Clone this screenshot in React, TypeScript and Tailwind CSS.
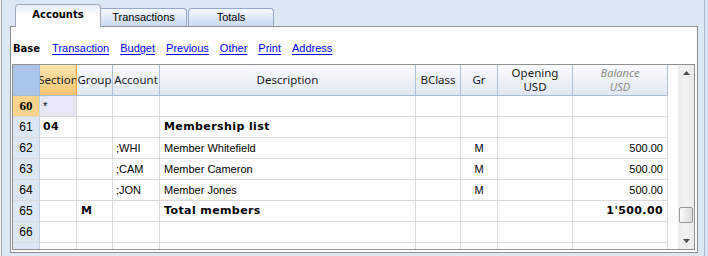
import React from "react";

const COLS = "grid-cols-[27px_37px_36px_47px_256px_45px_37px_75px_95px]";

type Row = {
  n: string;
  sec?: string;
  grp?: string;
  acc?: string;
  desc?: string;
  gr?: string;
  bal?: string;
  bold?: boolean;
  current?: boolean;
};

const rows: Row[] = [
  { n: "60", sec: "*", current: true },
  { n: "61", sec: "04", desc: "Membership list", bold: true },
  { n: "62", acc: ";WHI", desc: "Member Whitefield", gr: "M", bal: "500.00" },
  { n: "63", acc: ";CAM", desc: "Member Cameron", gr: "M", bal: "500.00" },
  { n: "64", acc: ";JON", desc: "Member Jones", gr: "M", bal: "500.00" },
  { n: "65", grp: "M", desc: "Total members", bal: "1'500.00", bold: true },
  { n: "66" },
];

const tahoma = "font-['Liberation_Sans',Arial,sans-serif]";
const tahomaBold = "font-['DejaVu_Sans',sans-serif] font-bold";
const dataBold = "font-['DejaVu_Sans',sans-serif] font-bold tracking-[0.4px]";
const segoe = "font-['Noto_Sans',sans-serif]";

function Cell({
  children,
  className = "",
}: {
  children?: React.ReactNode;
  className?: string;
}) {
  return (
    <div
      className={`h-full border-r border-r-[#dadada] flex items-center overflow-hidden whitespace-nowrap ${className}`}
    >
      {children}
    </div>
  );
}

function HeadCell({
  children,
  className = "",
}: {
  children?: React.ReactNode;
  className?: string;
}) {
  return (
    <div
      className={`h-full border-r border-r-[#aec0d8] flex flex-col items-center justify-center overflow-hidden whitespace-nowrap text-[11.5px] leading-[14px] text-[#1b1b1b] ${segoe} ${className}`}
    >
      {children}
    </div>
  );
}

function Tri({ up }: { up?: boolean }) {
  return (
    <svg width="7" height="4" viewBox="0 0 7 4">
      {up ? (
        <polygon points="0,4 7,4 3.5,0" fill="#4a4a4a" />
      ) : (
        <polygon points="0,0 7,0 3.5,4" fill="#4a4a4a" />
      )}
    </svg>
  );
}

export default function App() {
  return (
    <div className="w-[708px] h-[256px] bg-[#dce8f4] flex overflow-hidden">
      <div className="w-px h-full bg-[#f4f6f8]" />
      <div className="w-px h-full bg-[#9ea3aa]" />
      <div className="ml-[8px] w-[688px] flex flex-col">
        {/* tabs */}
        <div className="h-[26px] flex items-end pl-[5px] relative z-10">
          <div
            className={`h-[23px] -mb-px w-[86px] bg-linear-to-b from-[#e6eefa] via-white to-white border border-b-0 border-[#a3a9b3] rounded-t-[4px] flex items-center justify-center pb-[3px] text-[10px] text-black ${tahomaBold}`}
          >
            Accounts
          </div>
          <div
            className={`h-[18px] w-[86px] bg-linear-to-b from-[#f6f9fe] to-[#c7d8f1] border border-b-0 border-l-0 border-[#95a8c6] rounded-tr-[4px] flex items-center justify-center text-[11px] text-black ${tahoma}`}
          >
            Transactions
          </div>
          <div
            className={`h-[18px] w-[86px] ml-px bg-linear-to-b from-[#f6f9fe] to-[#c7d8f1] border border-b-0 border-[#95a8c6] rounded-t-[4px] flex items-center justify-center text-[11px] text-black ${tahoma}`}
          >
            Totals
          </div>
        </div>
        {/* panel */}
        <div className="h-[227px] border border-[#8d9097] bg-white pl-px pr-[2px] flex flex-col">
          <div className="h-[37px] pt-[5px] flex items-center gap-[11px] pl-px text-[11px]">
            <span className={`text-[10px] text-black mr-px ${tahomaBold}`}>Base</span>
            {["Transaction", "Budget", "Previous", "Other", "Print", "Address"].map(
              (l) => (
                <span
                  key={l}
                  className={`text-[#0000ff] underline underline-offset-[2px] ${tahoma}`}
                >
                  {l}
                </span>
              )
            )}
          </div>
          {/* grid */}
          <div className="h-[186px] border border-[#8f8f8f] flex">
            <div className="w-[655px] flex flex-col">
              {/* header */}
              <div
                className={`h-[31px] grid ${COLS} border-b border-b-[#a8bbd5] bg-linear-to-b from-[#fbfcfe] to-[#e0e8f4]`}
              >
                <div className="h-full bg-[#abc5e9] border-r border-r-[#9db6d9]" />
                <HeadCell className="bg-linear-to-b from-[#fde4ad] to-[#f8c673] border-r-[#f0a03c]">
                  Section
                </HeadCell>
                <HeadCell>Group</HeadCell>
                <HeadCell>Account</HeadCell>
                <HeadCell>Description</HeadCell>
                <HeadCell>BClass</HeadCell>
                <HeadCell>Gr</HeadCell>
                <HeadCell>
                  <span>Opening</span>
                  <span>USD</span>
                </HeadCell>
                <HeadCell className="italic text-[#8c8c8c] text-[11px]">
                  <span>Balance</span>
                  <span>USD</span>
                </HeadCell>
              </div>
              {/* rows */}
              {rows.map((r) => {
                const b = r.bold ? dataBold : tahoma;
                return (
                  <div
                    key={r.n}
                    className={`h-[21px] grid ${COLS} border-b border-b-[#dadada] text-[11px] text-black`}
                  >
                    <div
                      className={`h-full border-r border-r-[#c3d1e4] flex items-center justify-center text-[12px] ${
                        r.current
                          ? "bg-[#fbd48c] font-bold font-['Liberation_Serif',serif] text-[13px]"
                          : "bg-[#dde7f3] font-['Liberation_Sans_Narrow','Liberation_Sans',sans-serif]"
                      }`}
                    >
                      {r.n}
                    </div>
                    <Cell
                      className={`px-[3px] ${r.current ? "bg-[#e6e6f4]" : ""} ${
                        r.sec === "04" ? dataBold : tahoma
                      }`}
                    >
                      {r.sec}
                    </Cell>
                    <Cell className={`px-[4px] ${dataBold}`}>{r.grp}</Cell>
                    <Cell className={`px-[3px] ${tahoma}`}>{r.acc}</Cell>
                    <Cell className={`px-[4px] ${b}`}>{r.desc}</Cell>
                    <Cell />
                    <Cell className={`justify-center ${tahoma}`}>{r.gr}</Cell>
                    <Cell />
                    <Cell className={`justify-end px-[4px] ${b}`}>{r.bal}</Cell>
                  </div>
                );
              })}
              <div className={`flex-1 grid ${COLS}`}>
                <div className="h-full bg-[#dde7f3] border-r border-r-[#c3d1e4]" />
                <Cell />
                <Cell />
                <Cell />
                <Cell />
                <Cell />
                <Cell />
                <Cell />
                <Cell />
              </div>
            </div>
            <div className="w-[10px]" />
            {/* scrollbar */}
            <div className="w-[16px] relative bg-linear-to-r from-[#ebebeb] via-[#f3f2f3] to-[#eceaec] flex flex-col items-center justify-between py-[6px]">
              <Tri up />
              <Tri />
              <div className="absolute left-px top-[142px] w-[14px] h-[16px] rounded-[2px] border border-[#9a9a9a] bg-linear-to-r from-[#fbfbfb] to-[#dadada]" />
            </div>
          </div>
        </div>
      </div>
      <div className="w-[6px] h-full" />
      <div className="w-px h-full bg-[#a9b7c9]" />
      <div className="flex-1 h-full bg-[#d6e5f5]" />
    </div>
  );
}
